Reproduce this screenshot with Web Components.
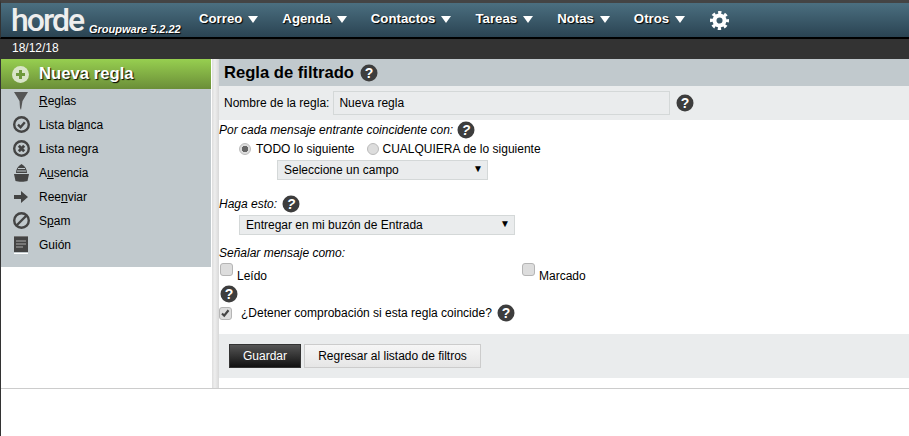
<!DOCTYPE html>
<html>
<head>
<meta charset="utf-8">
<title>Horde</title>
<style>
html, body { margin: 0; padding: 0; background: #fff; }
body { font-family: "Liberation Sans", Arial, sans-serif; font-size: 12px; color: #000; overflow: hidden; }
</style>
</head>
<body>
<horde-app>
  <horde-topbar slot="top"></horde-topbar>
  <horde-sidebar slot="side"></horde-sidebar>
  <filter-form slot="main"></filter-form>
</horde-app>

<script>
const HELP = `<svg class="help" width="18" height="18" viewBox="0 0 18 18"><circle cx="9" cy="9" r="8.5" fill="#3d3d3d"/><text x="9" y="13.6" text-anchor="middle" font-family="Liberation Sans" font-weight="700" font-size="14" fill="#fff">?</text></svg>`;

class HordeApp extends HTMLElement {
    constructor() {
        super();
        const shadowRoot = this.attachShadow({ mode: 'open' });
        shadowRoot.innerHTML = `
            <style>
                :host { display: block; position: relative; width: 909px; height: 436px; overflow: hidden; }
                .body { display: flex; height: 377px; border-left: 1px solid #333; box-sizing: border-box; }
                .split { width: 7px; margin-left: 1px; height: 329px; background: linear-gradient(90deg, #ddd, #eee 40%, #d8d8d8); flex: none; }
                .main { flex: 1; min-width: 0; }
                .foot { position: absolute; left: 1px; right: 0; top: 388px; border-top: 1px solid #ccc; }
            </style>
            <slot name="top"></slot>
            <div class="body">
                <slot name="side"></slot>
                <div class="split"></div>
                <div class="main"><slot name="main"></slot></div>
            </div>
            <div class="foot"></div>`;
    }
}
customElements.define('horde-app', HordeApp);

class HordeTopbar extends HTMLElement {
    constructor() {
        super();
        const shadowRoot = this.attachShadow({ mode: 'open' });
        const items = ['Correo', 'Agenda', 'Contactos', 'Tareas', 'Notas', 'Otros'];
        let nav = '';
        for (const item of items) {
            nav += `<span class="item">${item}<i></i></span>`;
        }
        shadowRoot.innerHTML = `
            <style>
                :host { display: block; }
                .bar { height: 34px; border-top: 3px solid #444; border-left: 1px solid #333; background: linear-gradient(#4b6f80, #2a4352); border-bottom: 2px solid #000; display: flex; align-items: flex-start; color: #fff; }
                .logo { font: 500 32px/32px Roboto, sans-serif; letter-spacing: -2px; margin: 1px 0 0 10px; width: 78px; height: 32px; color: #eee; }
                .ver { font: italic 700 11px "Liberation Sans", sans-serif; margin: 20px 0 0 0; width: 110px; text-shadow: 1px 1px 1px #000; }
                nav { display: flex; margin: 8px 0 0 0; font: 700 13.22px/16px "Liberation Sans", sans-serif; gap: 24px; text-shadow: 1px 1px 1px #000; }
                .item { display: flex; align-items: center; }
                .item i { width: 0; height: 0; border: 5.5px solid transparent; border-top: 7px solid #fff; border-bottom: 0; margin-left: 6px; }
                .gear { margin: 8px 0 0 25px; }
                .date { height: 20px; background: #333; color: #fff; font-size: 12px; line-height: 19px; padding-left: 12px; }
            </style>
            <div class="bar">
                <div class="logo">horde</div>
                <div class="ver">Groupware 5.2.22</div>
                <nav>${nav}</nav>
                <svg class="gear" width="19" height="19" viewBox="0 0 20 20" fill="none" stroke="#fff"><circle cx="10" cy="10" r="5.3" stroke-width="4.200"/><circle cx="10" cy="10" r="8.300" stroke-width="3.400" stroke-dasharray="3.400 3.120" stroke-dashoffset="1.700"/></svg>
            </div>
            <div class="date">18/12/18</div>`;
    }
}
customElements.define('horde-topbar', HordeTopbar);

class HordeSidebar extends HTMLElement {
    constructor() {
        super();
        const shadowRoot = this.attachShadow({ mode: 'open' });
        const ring = '<circle cx="8.500" cy="8.500" r="7.300" fill="none" stroke="#444" stroke-width="2.400"/>';
        const rows = [
            ['<u>R</u>eglas', '<path d="M1 0h14L9.500 9 8 18 7 16 6.500 9z" fill="#555"/>'],
            ['Lista bl<u>a</u>nca', ring + '<path d="M5 8.700l2.600 2.500 4.200-5" fill="none" stroke="#444" stroke-width="2.400"/>'],
            ['Lista negra', ring + '<path d="M5.800 5.800l5.400 5.400m0-5.400l-5.400 5.400" stroke="#444" stroke-width="2.800"/>'],
            ['A<u>u</u>sencia', '<path d="M1 10h15l-1.500 7c-3 1-9 1-12 0z" fill="#444"/><path d="M3 9C3 5 5 2 8.500 0c3.500 2 5.500 5 5.500 9z" fill="#444"/><path d="M5 4.500h7M4 7h9" stroke="#c1c9cd"/>'],
            ['Ree<u>n</u>viar', '<path d="M1 7h7V3l7 6-7 6v-4H1z" fill="#444"/>'],
            ['S<u>p</u>am', ring + '<path d="M3.500 13.500l10-10" stroke="#444" stroke-width="2.400"/>'],
            ['Guión', '<path d="M1 1h14v15H1z" fill="#444"/><path d="M1 0h14v1H1z" fill="#777"/><path d="M3 4h10v2H3zM3 7h10v2H3zM3 10h7v2H3z" fill="#777"/><path d="M1 17h14v1H1z" fill="#fff"/>']
        ];
        let list = '';
        for (const row of rows) {
            list += `<div class="row"><svg width="18" height="18" viewBox="0 0 18 18">${row[1]}</svg><span>${row[0]}</span></div>`;
        }
        shadowRoot.innerHTML = `
            <style>
                :host { display: block; width: 210px; flex: none; }
                .new { height: 30px; background: linear-gradient(#97cf50, #6b8e38); display: flex; align-items: center; padding-left: 11px; color: #fff; font-weight: 700; font-size: 16.7px; text-shadow: 1px 1px 1px #000; gap: 10px; }
                .list { background: #c1c9cd; height: 178px; }
                .row { height: 24px; display: flex; align-items: center; padding-left: 12px; gap: 8px; font-size: 12px; }
                u { text-decoration: underline; }
            </style>
            <div class="new">
                <svg width="17" height="17" viewBox="0 0 17 17"><circle cx="8.500" cy="8.500" r="8.500" fill="#d9e5c8"/><path d="M7 4h3v3h3v3h-3v3H7v-3H4V7h3z" fill="#6f9a3c"/></svg>
                <span>Nueva regla</span>
            </div>
            <div class="list">${list}</div>`;
    }
}
customElements.define('horde-sidebar', HordeSidebar);

class FilterForm extends HTMLElement {
    constructor() {
        super();
        const shadowRoot = this.attachShadow({ mode: 'open' });
        shadowRoot.innerHTML = `
            <style>
                :host { display: block; font-size: 12px; }
                .help { flex: none; }
                .head { height: 27px; background: #c1c9cd; display: flex; align-items: center; padding-left: 5px; gap: 6px; font-weight: 700; font-size: 16.6px; }
                .name { height: 34px; background: #eaeced; display: flex; align-items: center; padding-left: 5px; gap: 3px; }
                .field { width: 337px; height: 24px; margin-left: 1px; margin-right: 3px; padding-left: 5px; line-height: 22px; box-sizing: border-box; background: #eaeced; border: 1px solid #d4d8d8; }
                .line { display: flex; align-items: center; gap: 5px; }
                .label { font-style: italic; }
                .radio { display: flex; align-items: center; padding-left: 20px; height: 20px; margin-top: 1px; }
                .dot { width: 12px; height: 12px; border-radius: 50%; border: 1px solid #bbb; background: #ddd; margin-right: 4px; box-sizing: border-box; display: inline-block; flex: none; }
                .dot.on { background: radial-gradient(circle, #666 3px, #ddd 3.500px); margin-right: 5px; }
                .select { position: relative; background: #eaeced; border: 1px solid #d4d8d8; height: 20px; box-sizing: border-box; line-height: 19px; }
                .select::after { content: "▼"; position: absolute; right: 4px; top: 0; font-size: 10px; line-height: 16px; }
                .s1 { width: 211px; margin: 1px 0 0 58px; padding-left: 6px; }
                .s2 { width: 276px; margin: 2px 0 0 20px; padding-left: 6px; }
                .box { width: 13px; height: 13px; border-radius: 3px; border: 1px solid #b5b5b5; background: #ddd; box-sizing: border-box; display: inline-block; flex: none; }
                .marks { display: flex; height: 22px; margin: 2px 0 0 1px; }
                .mark { display: flex; width: 302px; }
                .mark span { margin: 6px 0 0 4px; }
                .hp { display: flex; height: 18px; margin-left: 1px; }
                .stop { display: flex; align-items: center; height: 18px; margin-top: 1px; }
                .stop .box { margin-right: 9px; position: relative; }
                .stop .box svg { position: absolute; left: 0; top: 0; }
                .stop span { margin-right: 5px; }
                .btns { margin-top: 12px; height: 44px; background: #eaeced; display: flex; align-items: center; padding-left: 10px; gap: 3px; }
                .btn { height: 24px; box-sizing: border-box; display: flex; align-items: center; justify-content: center; }
                .save { width: 72px; color: #fff; background: linear-gradient(#555, #111); border: 1px solid #333; }
                .back { width: 177px; background: linear-gradient(#f6f6f6, #e6e6e6); border: 1px solid #ccc; }
            </style>
            <div class="head">Regla de filtrado ${HELP}</div>
            <div class="name">Nombre de la regla: <div class="field">Nueva regla</div>${HELP}</div>
            <div class="line label" style="margin-top:1px;height:17px;gap:4px">Por cada mensaje entrante coincidente con: ${HELP}</div>
            <div class="radio"><i class="dot on"></i>TODO lo siguiente<i class="dot" style="margin-left:12px"></i>CUALQUIERA de lo siguiente</div>
            <div class="select s1">Seleccione un campo</div>
            <div class="line label" style="margin-top:15px;height:18px">Haga esto: ${HELP}</div>
            <div class="select s2">Entregar en mi buzón de Entrada</div>
            <div class="label" style="margin-top:11px;height:15px">Señalar mensaje como:</div>
            <div class="marks">
                <div class="mark"><i class="box"></i><span>Leído</span></div>
                <div class="mark"><i class="box"></i><span>Marcado</span></div>
            </div>
            <div class="hp">${HELP}</div>
            <div class="stop">
                <i class="box"><svg width="11" height="11" viewBox="0 0 11 11"><path d="M2 5.500l2.200 2.200 4.300-5.500" fill="none" stroke="#444" stroke-width="2.200"/></svg></i>
                <span>¿Detener comprobación si esta regla coincide?</span>${HELP}
            </div>
            <div class="btns"><div class="btn save">Guardar</div><div class="btn back">Regresar al listado de filtros</div></div>`;
    }
}
customElements.define('filter-form', FilterForm);
</script>
</body>
</html>
